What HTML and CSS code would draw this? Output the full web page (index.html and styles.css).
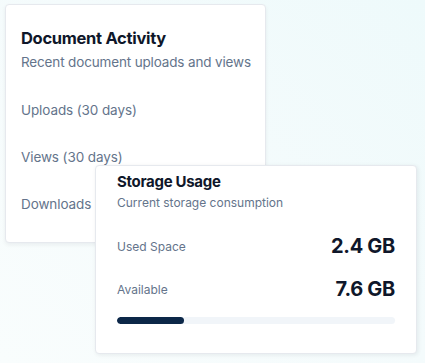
FILE: index.html
```html
<!DOCTYPE html>
<html lang="en">
<head>
    <meta charset="UTF-8">
    <meta name="viewport" content="width=device-width, initial-scale=1.0">
    <title>Documents</title>
    <link rel="stylesheet" href="styles.css">
</head>
<body>
    <!-- Actividad de documentos -->
    <div class="card activity">
        <h2 class="card-title">Document Activity</h2>
        <p class="card-desc">Recent document uploads and views</p>
        <ul class="stats">
            <li>Uploads (30 days)</li>
            <li>Views (30 days)</li>
            <li>Downloads</li>
        </ul>
    </div>

    <!-- Uso de almacenamiento, encima de la otra tarjeta -->
    <div class="card storage">
        <h2 class="card-title">Storage Usage</h2>
        <p class="card-desc">Current storage consumption</p>
        <div class="usage-row first">
            <span class="label">Used Space</span>
            <span class="value">2.4 GB</span>
        </div>
        <div class="usage-row">
            <span class="label">Available</span>
            <span class="value">7.6 GB</span>
        </div>
        <div class="bar">
            <div class="bar-fill" style="width: 24%;"></div>
        </div>
    </div>
</body>
</html>
```

FILE: styles.css
```css
body {
    margin: 0;
    padding: 4px 0 0 5px;
    height: 363px;
    box-sizing: border-box;
    position: relative;
    overflow: hidden;
    font-family: Inter, "Noto Sans", sans-serif;
    color: #0f172a;
    background: linear-gradient(225deg, #eefafb 0%, #f4fbfc 45%, #f9fdfd 100%);
}

.card {
    background: #ffffff;
    border: 1px solid #e6e9ee;
    border-radius: 4px;
    box-sizing: border-box;
}

.card-title {
    margin: 0;
    font-weight: 700;
    letter-spacing: -0.3px;
    white-space: nowrap;
}

.card-desc {
    margin: 0;
    color: #64748b;
    white-space: nowrap;
}

/* Tarjeta de actividad */
.activity {
    width: 261px;
    height: 239px;
    padding: 21px 15px 0 15px;
    box-shadow: 0 2px 4px rgba(15, 23, 42, 0.06);
}

.activity .card-title {
    font-size: 16.5px;
    line-height: 24px;
}

.activity .card-desc {
    margin-top: 2px;
    font-size: 13.5px;
    line-height: 20px;
    letter-spacing: -0.15px;
}

.stats {
    list-style: none;
    margin: 28px 0 0;
    padding: 0;
    display: flex;
    flex-direction: column;
    gap: 27px;
}

.stats li {
    font-size: 13.5px;
    line-height: 20px;
    color: #64748b;
    letter-spacing: -0.1px;
}

/* Tarjeta de almacenamiento */
.storage {
    position: absolute;
    top: 165px;
    left: 95px;
    width: 322px;
    height: 189px;
    padding: 6px 21px 0 21px;
    box-shadow: 1px 1px 4px rgba(15, 23, 42, 0.08);
}

.storage .card-title {
    font-size: 15px;
    line-height: 20px;
}

.storage .card-desc {
    margin-top: 3px;
    font-size: 12px;
    line-height: 16px;
}

.usage-row {
    display: flex;
    justify-content: space-between;
    align-items: center;
    margin-top: 15px;
    height: 28px;
}

.usage-row.first {
    margin-top: 21px;
}

.label {
    font-size: 12px;
    color: #64748b;
}

.value {
    font-size: 20px;
    font-weight: 700;
    letter-spacing: -0.3px;
}

.bar {
    margin-top: 14px;
    height: 7px;
    border-radius: 999px;
    background: #f1f5f9;
    overflow: hidden;
}

.bar-fill {
    height: 100%;
    border-radius: 999px;
    background: #0c2748;
}
```
